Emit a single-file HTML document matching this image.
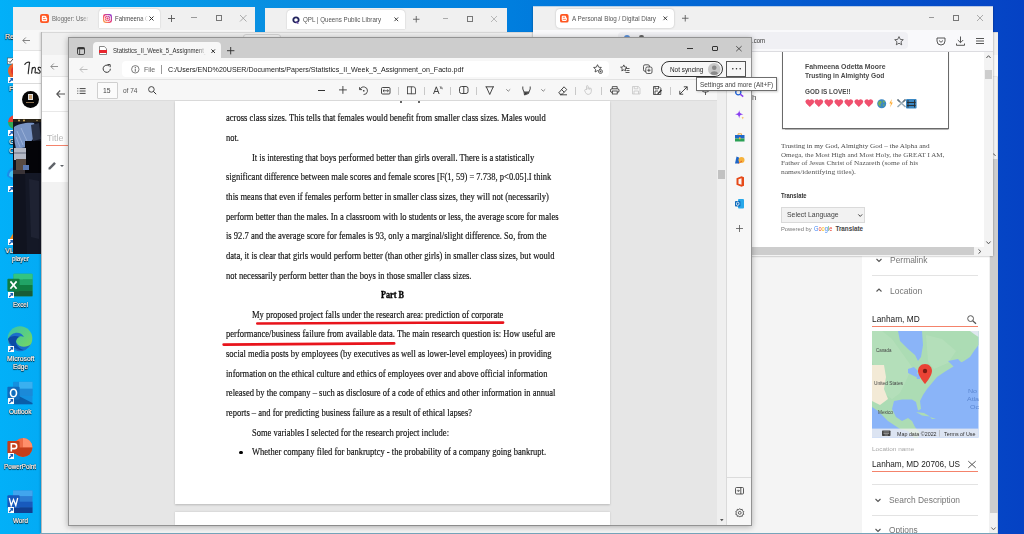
<!DOCTYPE html>
<html><head><meta charset="utf-8">
<style>
*{margin:0;padding:0;box-sizing:border-box}
html,body{width:1024px;height:534px;overflow:hidden}
body{position:relative;font-family:"Liberation Sans",sans-serif;background:linear-gradient(90deg,#02b0f8 0%,#0890e2 25%,#007ede 50%,#045ed0 75%,#0542c4 100%)}
.a{position:absolute}
.t{position:absolute;white-space:pre;transform-origin:0 0}
.w{position:absolute;left:0;top:0;width:1024px;height:534px}
.lbl{text-shadow:0 0 1px #000,0 1px 1px #000}
svg{position:absolute;overflow:visible}
</style></head><body>
<div class="w" id="desk"><svg style="left:7px;top:57px" width="7" height="27" viewBox="0 0 7 27"><rect x="0.5" y="1" width="6" height="6" fill="#fff" stroke="#555" stroke-width="0.6"/><path d="M1.5 4 L3 5.5 L6 2" stroke="#333" stroke-width="0.9" fill="none"/><circle cx="9" cy="14" r="8" fill="#f0622a"/><circle cx="9" cy="14" r="5" fill="#e2352d"/></svg><svg style="left:7.5px;top:77.0px" width="6" height="6" viewBox="0 0 6 6"><rect x="0" y="0" width="6" height="6" fill="#fff"/><path d="M1.2 5 L4.2 2 M2.4 1.6 H4.5 V3.7" stroke="#1a5fb4" stroke-width="1.2" fill="none"/></svg><svg style="left:8px;top:115px" width="6" height="14" viewBox="0 0 6 14"><path d="M6 0 A8 8 0 0 0 0 7 L6 7Z" fill="#e94335"/><path d="M0 7 A8 8 0 0 0 6 14 L6 7Z" fill="#34a853"/></svg><svg style="left:7.5px;top:130.0px" width="6" height="6" viewBox="0 0 6 6"><rect x="0" y="0" width="6" height="6" fill="#fff"/><path d="M1.2 5 L4.2 2 M2.4 1.6 H4.5 V3.7" stroke="#1a5fb4" stroke-width="1.2" fill="none"/></svg><svg style="left:7px;top:167px" width="7" height="14" viewBox="0 0 7 14"><path d="M7 0 A9 9 0 0 0 0 9 L7 14Z" fill="#1e8ae8"/><path d="M7 3 A6 6 0 0 0 2 9 L7 11Z" fill="#45c0f0"/></svg><svg style="left:7.5px;top:186.0px" width="6" height="6" viewBox="0 0 6 6"><rect x="0" y="0" width="6" height="6" fill="#fff"/><path d="M1.2 5 L4.2 2 M2.4 1.6 H4.5 V3.7" stroke="#1a5fb4" stroke-width="1.2" fill="none"/></svg><svg style="left:9px;top:232px" width="5" height="8" viewBox="0 0 5 8"><path d="M5 0 L0 8 H5Z" fill="#f08a1c"/></svg><svg style="left:7.5px;top:239.0px" width="6" height="6" viewBox="0 0 6 6"><rect x="0" y="0" width="6" height="6" fill="#fff"/><path d="M1.2 5 L4.2 2 M2.4 1.6 H4.5 V3.7" stroke="#1a5fb4" stroke-width="1.2" fill="none"/></svg><div class="t" style="left:5.00px;top:32.57px;font-size:7.00px;line-height:7.00px;color:#fff;text-shadow:0 0 1px #000,0 0 1px #000,0 1px 1px #000;-webkit-text-stroke:0.2px #fff;">Re</div><div class="t" style="left:9.00px;top:85.07px;font-size:7.00px;line-height:7.00px;color:#fff;text-shadow:0 0 1px #000,0 0 1px #000,0 1px 1px #000;-webkit-text-stroke:0.2px #fff;">F</div><div class="t" style="left:9.00px;top:137.57px;font-size:7.00px;line-height:7.00px;color:#fff;text-shadow:0 0 1px #000,0 0 1px #000,0 1px 1px #000;-webkit-text-stroke:0.2px #fff;">G</div><div class="t" style="left:9.00px;top:146.57px;font-size:7.00px;line-height:7.00px;color:#fff;text-shadow:0 0 1px #000,0 0 1px #000,0 1px 1px #000;-webkit-text-stroke:0.2px #fff;">C</div><div class="t" style="left:5.00px;top:246.57px;font-size:7.00px;line-height:7.00px;color:#fff;text-shadow:0 0 1px #000,0 0 1px #000,0 1px 1px #000;-webkit-text-stroke:0.2px #fff;">VL</div><div class="t" style="left:11.50px;top:254.57px;font-size:7.00px;line-height:7.00px;color:#fff;transform:scaleX(0.8911);text-shadow:0 0 1px #000,0 0 1px #000,0 1px 1px #000;-webkit-text-stroke:0.2px #fff;">player</div><svg style="left:7px;top:273px" width="26" height="26" viewBox="0 0 26 26"><rect x="6.5" y="0.8" width="19" height="22.5" rx="1" fill="#21a366"/><rect x="6.5" y="0.8" width="19" height="5.6" fill="#33c481"/><rect x="16" y="6.4" width="9.5" height="5.6" fill="#21a366"/><rect x="6.5" y="12" width="19" height="5.6" fill="#107c41"/><rect x="6.5" y="17.6" width="19" height="5.7" fill="#185c37"/><rect x="0.4" y="5.7" width="12.2" height="12.7" rx="1" fill="#107c41"/><path d="M3.4 8.4 L9.6 15.8 M9.6 8.4 L3.4 15.8" stroke="#fff" stroke-width="1.7"/></svg><svg style="left:7.8px;top:292.3px" width="6" height="6" viewBox="0 0 6 6"><rect x="0" y="0" width="6" height="6" fill="#fff"/><path d="M1.2 5 L4.2 2 M2.4 1.6 H4.5 V3.7" stroke="#1a5fb4" stroke-width="1.2" fill="none"/></svg><div class="t" style="left:12.50px;top:301.07px;font-size:7.00px;line-height:7.00px;color:#fff;transform:scaleX(0.8759);text-shadow:0 0 1px #000,0 0 1px #000,0 1px 1px #000;-webkit-text-stroke:0.2px #fff;">Excel</div><svg style="left:7px;top:326px" width="26" height="26" viewBox="0 0 26 26"><defs><linearGradient id="eg1" x1="0" y1="0" x2="1" y2="1"><stop offset="0" stop-color="#36c3ae"/><stop offset="1" stop-color="#7ed957"/></linearGradient></defs><circle cx="13" cy="12.5" r="12.3" fill="url(#eg1)"/><path d="M1 13 A12 12 0 0 0 24 18 C20 22 12 22 9 16 C8 12 13 9 17 11 C14 5 5 5 1 13Z" fill="#1b6fcb"/><path d="M1 13 C3 20 10 25 17 24 C12 23 9 19 9 16 C9 13 11 11 13 11 C8 9 3 10 1 13Z" fill="#0c4aa6"/></svg><svg style="left:7.8px;top:346.0px" width="6" height="6" viewBox="0 0 6 6"><rect x="0" y="0" width="6" height="6" fill="#fff"/><path d="M1.2 5 L4.2 2 M2.4 1.6 H4.5 V3.7" stroke="#1a5fb4" stroke-width="1.2" fill="none"/></svg><div class="t" style="left:6.75px;top:355.07px;font-size:7.00px;line-height:7.00px;color:#fff;transform:scaleX(0.9681);text-shadow:0 0 1px #000,0 0 1px #000,0 1px 1px #000;-webkit-text-stroke:0.2px #fff;">Microsoft</div><div class="t" style="left:12.50px;top:363.07px;font-size:7.00px;line-height:7.00px;color:#fff;transform:scaleX(0.9169);text-shadow:0 0 1px #000,0 0 1px #000,0 1px 1px #000;-webkit-text-stroke:0.2px #fff;">Edge</div><svg style="left:7px;top:381px" width="26" height="25" viewBox="0 0 26 25"><rect x="6" y="0.8" width="19.5" height="22.5" rx="1" fill="#1490df"/><rect x="12" y="0.8" width="13.5" height="7" fill="#3ab0f0"/><rect x="12" y="7.8" width="13.5" height="7" fill="#1b8ad8"/><path d="M6 12 L25.5 22 V23.3 H6Z" fill="#0a5ea8"/><rect x="0.4" y="5.7" width="12.2" height="12.7" rx="1" fill="#0f6cbd"/><ellipse cx="6.5" cy="12" rx="3" ry="3.8" fill="none" stroke="#fff" stroke-width="1.6"/></svg><svg style="left:7.8px;top:398.0px" width="6" height="6" viewBox="0 0 6 6"><rect x="0" y="0" width="6" height="6" fill="#fff"/><path d="M1.2 5 L4.2 2 M2.4 1.6 H4.5 V3.7" stroke="#1a5fb4" stroke-width="1.2" fill="none"/></svg><div class="t" style="left:8.75px;top:408.07px;font-size:7.00px;line-height:7.00px;color:#fff;transform:scaleX(0.9326);text-shadow:0 0 1px #000,0 0 1px #000,0 1px 1px #000;-webkit-text-stroke:0.2px #fff;">Outlook</div><svg style="left:7px;top:436px" width="26" height="24" viewBox="0 0 26 24"><circle cx="16" cy="11.5" r="9.4" fill="#ed6c47"/><path d="M16 2.1 A9.4 9.4 0 0 1 25.4 11.5 H16Z" fill="#ff8f6b"/><path d="M6.6 11.5 A9.4 9.4 0 0 0 25.4 11.5Z" fill="#c43e1c"/><rect x="0.4" y="5.1" width="12.2" height="12.7" rx="1" fill="#c43e1c"/><path d="M4.3 15.5 V7.8 H7.3 A2.4 2.4 0 0 1 7.3 12.6 H4.3" stroke="#fff" stroke-width="1.6" fill="none"/></svg><svg style="left:7.8px;top:453.0px" width="6" height="6" viewBox="0 0 6 6"><rect x="0" y="0" width="6" height="6" fill="#fff"/><path d="M1.2 5 L4.2 2 M2.4 1.6 H4.5 V3.7" stroke="#1a5fb4" stroke-width="1.2" fill="none"/></svg><div class="t" style="left:4.00px;top:462.57px;font-size:7.00px;line-height:7.00px;color:#fff;transform:scaleX(0.8939);text-shadow:0 0 1px #000,0 0 1px #000,0 1px 1px #000;-webkit-text-stroke:0.2px #fff;">PowerPoint</div><svg style="left:7px;top:490px" width="26" height="24" viewBox="0 0 26 24"><rect x="6" y="0.5" width="19.5" height="22.5" rx="1" fill="#2b7cd3"/><rect x="6" y="0.5" width="19.5" height="5.6" fill="#41a5ee"/><rect x="6" y="11.7" width="19.5" height="5.6" fill="#185abd"/><rect x="6" y="17.3" width="19.5" height="5.7" fill="#103f91"/><rect x="0.4" y="5.3" width="12.2" height="12.7" rx="1" fill="#185abd"/><path d="M2.3 8 L4.2 15.5 L6.5 9.5 L8.8 15.5 L10.7 8" stroke="#fff" stroke-width="1.3" fill="none"/></svg><svg style="left:7.8px;top:507.0px" width="6" height="6" viewBox="0 0 6 6"><rect x="0" y="0" width="6" height="6" fill="#fff"/><path d="M1.2 5 L4.2 2 M2.4 1.6 H4.5 V3.7" stroke="#1a5fb4" stroke-width="1.2" fill="none"/></svg><div class="t" style="left:12.50px;top:516.57px;font-size:7.00px;line-height:7.00px;color:#fff;transform:scaleX(0.9031);text-shadow:0 0 1px #000,0 0 1px #000,0 1px 1px #000;-webkit-text-stroke:0.2px #fff;">Word</div></div><div class="w" style="clip-path:inset(7px 769px 280px 13px)"><div class="a" style="left:13px;top:7px;width:243px;height:247px;background:#fff"></div><div class="a" style="left:13px;top:7px;width:243px;height:22.5px;background:#f0f0f0"></div><svg style="left:40px;top:14px" width="9" height="9" viewBox="0 0 9 9"><rect x="0" y="0" width="9" height="9" rx="2" fill="#ff5722"/><path d="M3 1.8 H5 C6 1.8 6.5 2.5 6.5 3.5 C6.5 3.9 6.8 4.1 7.2 4.2 V5.7 C7.2 6.7 6.5 7.3 5.5 7.3 H3.4 C2.5 7.3 1.8 6.6 1.8 5.7 V3 C1.8 2.3 2.3 1.8 3 1.8Z" fill="#fff"/><path d="M3.3 3.4 H4.8 M3.3 5.6 H5.8" stroke="#ff5722" stroke-width="0.8" stroke-linecap="round"/></svg><div class="a" style="left:51.60px;top:12.04px;width:39.00px;height:13.14px;-webkit-mask-image:linear-gradient(90deg,#000 30.00px,transparent 37.00px)"><div class="t" style="left:0.00px;top:2.58px;font-size:7.30px;line-height:7.30px;color:#6a6a6a;transform:scaleX(0.8202);">Blogger: User</div></div><div class="a" style="left:99px;top:9px;width:60.5px;height:19px;background:#fff;border-radius:4px 4px 0 0;box-shadow:0 0 1.5px rgba(0,0,0,.25)"></div><svg style="left:103px;top:14px" width="9" height="9" viewBox="0 0 9 9"><defs><linearGradient id="ig" x1="0" y1="1" x2="1" y2="0"><stop offset="0" stop-color="#fdc74d"/><stop offset="0.45" stop-color="#f4416c"/><stop offset="1" stop-color="#7b3fe4"/></linearGradient></defs><rect x="0" y="0" width="9" height="9" rx="2.4" fill="url(#ig)"/><rect x="1.6" y="1.6" width="5.8" height="5.8" rx="1.6" fill="none" stroke="#fff" stroke-width="0.9"/><circle cx="4.5" cy="4.5" r="1.4" fill="none" stroke="#fff" stroke-width="0.9"/></svg><div class="a" style="left:114.60px;top:12.04px;width:35.00px;height:13.14px;-webkit-mask-image:linear-gradient(90deg,#000 26.00px,transparent 33.00px)"><div class="t" style="left:0.00px;top:2.58px;font-size:7.30px;line-height:7.30px;color:#444;transform:scaleX(0.8159);">Fahmeena Odetta</div></div><svg style="left:148.5px;top:16px" width="5" height="5" viewBox="0 0 5 5"><path d="M0.5 0.5 L4.5 4.5 M4.5 0.5 L0.5 4.5" stroke="#333" stroke-width="1"/></svg><svg style="left:167.8px;top:15px" width="7" height="7" viewBox="0 0 7 7"><path d="M3.5 0 V7 M0 3.5 H7" stroke="#555" stroke-width="0.9"/></svg><div class="a" style="left:191px;top:17px;width:6px;height:0.8px;background:#999"></div><div class="a" style="left:215.6px;top:15.2px;width:6px;height:6px;border:0.8px solid #777"></div><svg style="left:240px;top:15px" width="6.5" height="6.5" viewBox="0 0 6.5 6.5"><path d="M0 0 L6.5 6.5 M6.5 0 L0 6.5" stroke="#999" stroke-width="0.8"/></svg><div class="a" style="left:13px;top:29.5px;width:243px;height:21.5px;background:#f7f7f7;border-bottom:1px solid #e3e3e3"></div><svg style="left:22px;top:37px" width="8" height="7" viewBox="0 0 8 7"><path d="M8 3.5 H1 M3.8 0.5 L0.8 3.5 L3.8 6.5" stroke="#666" stroke-width="0.8" fill="none"/></svg><svg style="left:24px;top:60px" width="18" height="15" viewBox="0 0 18 15"><path d="M0.8 4.5 C1.5 2.6 4.2 1.6 5.6 2.4 M5.6 2.4 C5 6 4.6 10 4.2 13.6 M7.6 13.2 C7.9 11 8.1 9.2 8.4 7.6 M8.3 9 C9.3 6.9 11.6 6.7 11.4 9 L11 12.6 C11.6 13.3 12.4 13 13 12.4 M16.8 7.8 C15.6 6.8 13.6 7.4 14.2 8.9 C14.8 10.3 17 10.8 16 12.6 C15.2 13.6 13.6 13.3 12.8 12.6" stroke="#262626" stroke-width="1.15" fill="none" stroke-linecap="round"/></svg><div class="a" style="left:13px;top:83px;width:243px;height:0.8px;background:#dbdbdb"></div><div class="a" style="left:22px;top:91.2px;width:16.8px;height:16.8px;border-radius:50%;background:#050505"></div><div class="a" style="left:27.8px;top:93.5px;width:5px;height:6px;background:#c9a070;border:0.8px solid #ddd"></div><div class="a" style="left:26px;top:101.5px;width:8px;height:1px;background:#8a7050"></div><svg style="left:13.3px;top:118.8px" width="28" height="135.5" viewBox="0 0 28 135.5">
<rect x="0" y="0" width="28" height="135.5" fill="#10131f"/>
<rect x="0" y="0" width="28" height="3" fill="#2a2418"/>
<circle cx="6" cy="1.5" r="1" fill="#d8b060"/><circle cx="11" cy="1.5" r="1" fill="#d8b060"/><circle cx="24" cy="1.5" r="0.8" fill="#a89060"/>
<path d="M1 8 C5 5 14 3 21 4 C23 8 22 14 20 20 L14 28 L3 30 C1 22 0.5 14 1 8Z" fill="#7894c4"/>
<path d="M4 12 L10 26 M8 9 L14 22 M3 18 L7 28" stroke="#a8bce0" stroke-width="1" opacity=".7"/>
<path d="M18 6 L26 4 L28 20 L20 22Z" fill="#2a3348"/>
<rect x="12" y="22" width="16" height="32" fill="#040408"/>
<rect x="1" y="29" width="12" height="12" fill="#b4b8c4"/>
<rect x="1" y="33" width="12" height="2" fill="#8a90a0"/>
<rect x="3" y="40" width="10" height="11" fill="#584a42"/>
<rect x="10" y="46" width="6" height="5" fill="#5a78b0"/>
<rect x="0" y="51" width="12" height="4" fill="#3a3438"/>
<path d="M12 54 L28 54 L28 135.5 L14 135.5Z" fill="#141826"/>
<path d="M16 60 L26 62 L26 120 L18 118Z" fill="#1e2232"/>
</svg></div></div><div class="w" style="clip-path:inset(7.5px 517px 502px 264.7px)"><div class="a" style="left:264.7px;top:7.5px;width:242px;height:25px;background:#f0f0f0"></div><div class="a" style="left:286.8px;top:9.8px;width:118px;height:19.4px;background:#fff;border-radius:4px 4px 0 0;box-shadow:0 0 1.5px rgba(0,0,0,.25)"></div><svg style="left:291.5px;top:15.5px" width="8" height="8" viewBox="0 0 8 8"><path d="M4 0.6 C1.8 0.6 0.4 2.1 0.4 4 C0.4 5.9 1.8 7.3 4 7.3 C6.2 7.3 7.6 5.9 7.6 4 C7.6 2.1 6.2 0.6 4 0.6Z M4 2.2 C5.1 2.2 5.7 3 5.7 4 C5.7 5 5.1 5.7 4 5.7 C2.9 5.7 2.3 5 2.3 4 C2.3 3 2.9 2.2 4 2.2Z" fill="#23255e" fill-rule="evenodd"/><path d="M4.6 5 L7 7.8 H5.2 L3.6 5.8Z" fill="#6b4ca8"/></svg><div class="t" style="left:302.60px;top:16.11px;font-size:7.20px;line-height:7.20px;color:#555;transform:scaleX(0.8599);">QPL | Queens Public Library</div><svg style="left:394.2px;top:17px" width="4.6" height="4.6" viewBox="0 0 5 5"><path d="M0.5 0.5 L4.5 4.5 M4.5 0.5 L0.5 4.5" stroke="#333" stroke-width="1"/></svg><svg style="left:413px;top:16.3px" width="6.5" height="6.5" viewBox="0 0 7 7"><path d="M3.5 0 V7 M0 3.5 H7" stroke="#555" stroke-width="0.9"/></svg><div class="a" style="left:442.8px;top:18.4px;width:5.5px;height:0.8px;background:#aaa"></div><div class="a" style="left:466.9px;top:16.4px;width:5.7px;height:5.5px;border:0.8px solid #777"></div><svg style="left:491.4px;top:16.3px" width="6" height="6" viewBox="0 0 6 6"><path d="M0 0 L6 6 M6 0 L0 6" stroke="#aaa" stroke-width="0.8"/></svg></div><div class="w" style="clip-path:inset(31.7px 26px 1px 37px)"><div class="a" style="left:40.5px;top:31.7px;width:957.5px;height:501.3px;background:#f4f4f4;border-left:1px solid #b8b8b8;box-shadow:-1px 0 2px rgba(0,0,0,.15)"></div><div class="a" style="left:41.5px;top:31.7px;width:956.5px;height:23.3px;background:#efefef;border-top:0.8px solid #d8d8d8"></div><div class="a" style="left:243px;top:33.7px;width:38px;height:6px;background:#f4f4f4;border:0.8px solid #d2d2d2;border-radius:3px 3px 0 0"></div><div class="a" style="left:41.5px;top:55px;width:956.5px;height:22px;background:#f7f7f7;border-bottom:0.8px solid #e6e6e6"></div><svg style="left:50px;top:63px" width="8" height="7" viewBox="0 0 8 7"><path d="M8 3.5 H1 M3.8 0.5 L0.8 3.5 L3.8 6.5" stroke="#777" stroke-width="0.8" fill="none"/></svg><div class="a" style="left:41.5px;top:77px;width:820px;height:104.8px;background:#fff"></div><div class="a" style="left:41.5px;top:181.8px;width:26px;height:352px;background:#f2f2f2"></div><div class="a" style="left:41.5px;top:111.3px;width:820px;height:0.8px;background:#e8e8e8"></div><svg style="left:56px;top:90px" width="9" height="8" viewBox="0 0 9 8"><path d="M9 4 H1 M4.2 0.5 L0.8 4 L4.2 7.5" stroke="#555" stroke-width="1.1" fill="none"/></svg><div class="t" style="left:46.70px;top:133.52px;font-size:8.60px;line-height:8.60px;color:#b8b8b8;transform:scaleX(1.0363);">Title</div><div class="a" style="left:46px;top:145px;width:40px;height:1.2px;background:#f4836b"></div><svg style="left:48px;top:161px" width="9" height="9" viewBox="0 0 9 9"><path d="M0.5 8.5 V6.8 L6.2 1.1 L7.9 2.8 L2.2 8.5Z" fill="#5f6368"/></svg><svg style="left:60px;top:165px" width="4" height="2" viewBox="0 0 4 2"><path d="M0 0 H4 L2 2Z" fill="#5f6368"/></svg><div class="a" style="left:861.7px;top:77px;width:127.3px;height:456px;background:#fff"></div><div class="a" style="left:989px;top:77px;width:9px;height:456px;background:#f1f1f1;border-right:1px solid #dcdcdc"></div><svg style="left:991px;top:152.5px" width="5" height="3.5" viewBox="0 0 5 3.5"><path d="M0.4 3 L2.5 0.7 L4.6 3" stroke="#666" stroke-width="1" fill="none"/></svg><div class="a" style="left:989.5px;top:159px;width:8.5px;height:353.5px;background:#cdcdcd"></div><svg style="left:991px;top:527px" width="5" height="3.5" viewBox="0 0 5 3.5"><path d="M0.4 0.5 L2.5 2.8 L4.6 0.5" stroke="#666" stroke-width="1" fill="none"/></svg><svg style="left:875.7px;top:258.0px" width="6" height="4.5" viewBox="0 0 6 4.5"><path d="M0.5 1 L3 3.5 L5.5 1" stroke="#555" stroke-width="1.1" fill="none"/></svg><div class="t" style="left:889.50px;top:255.89px;font-size:8.40px;line-height:8.40px;color:#757575;transform:scaleX(1.0071);">Permalink</div><div class="a" style="left:872.2px;top:275px;width:105.8px;height:0.8px;background:#e3e3e3"></div><svg style="left:875.7px;top:288.0px" width="6" height="4.5" viewBox="0 0 6 4.5"><path d="M0.5 3.5 L3 1 L5.5 3.5" stroke="#555" stroke-width="1.1" fill="none"/></svg><div class="t" style="left:889.50px;top:286.59px;font-size:8.40px;line-height:8.40px;color:#757575;transform:scaleX(1.0167);">Location</div><div class="t" style="left:871.50px;top:315.08px;font-size:9.00px;line-height:9.00px;color:#212121;transform:scaleX(0.9257);">Lanham, MD</div><svg style="left:966.5px;top:315.3px" width="9.5" height="9" viewBox="0 0 9.5 9"><circle cx="3.6" cy="3.6" r="2.9" fill="none" stroke="#555" stroke-width="1"/><path d="M5.7 5.7 L9 8.8" stroke="#555" stroke-width="1.2"/></svg><div class="a" style="left:871.5px;top:325.8px;width:106.5px;height:1.4px;background:#f4836b"></div><svg style="left:871.5px;top:331px" width="106.5" height="106.6" viewBox="0 0 106.5 106.6">
<rect x="0" y="0" width="106.5" height="106.6" fill="#8ab4f8"/>
<path d="M0 0 H106.5 V14 L102 20 L98 26 L92 30 L84 34 L74 40 L65 46 L60 52 L55 58 L51 64 L48 70 L49 78 L46 79.5 L44 71 L40 68.5 L30 68.5 L22 70 L20 78 L24 86 L30 90 L36 87 L40 90 L43 96 L48 102 L46 106.6 H42 L36 100 L28 98 L16 90 L6 80 L0 76Z" fill="#acdcb4"/>
<path d="M10 0 L20 8 L30 22 L40 36 L34 50 L28 62 L20 68 L12 62 L4 40 L0 30 V0Z" fill="#bfe3c2" opacity=".45"/>
<path d="M54 4 L70 8 L84 20 L76 32 L62 38 L56 30Z" fill="#bfe3c2" opacity=".45"/>
<path d="M26 0 H50 L51 14 L49 26 L46 30 L43 24 L36 18 L28 10Z" fill="#8ab4f8"/>
<path d="M36 38 L42 36 L46 40 L44 46 L40 44 L36 42Z M44 44 L48 42 L48 48 L45 48Z" fill="#8ab4f8"/>
<path d="M76 30 L86 28 L90 32 L82 36Z" fill="#8ab4f8"/>
<path d="M84 22 L90 18 L94 26 L88 30Z" fill="#acdcb4"/>
<path d="M0 34 L12 34 L14 46 L12 58 L16 68 L8 74 L0 70Z" fill="#f3ead6"/>
<path d="M98 0 H106.5 V6 L102 3Z" fill="#dfe7ef"/>
<path d="M44 81 L52 82 L58 85.5 L50 84.5Z M58 86 L64 88 L60 88Z" fill="#acdcb4"/>
<path d="M53 33 C48.5 33 46 36.5 46 40 C46 45 53 53 53 53 C53 53 60 45 60 40 C60 36.5 57.5 33 53 33Z" fill="#ea4335"/>
<circle cx="53" cy="40" r="2.2" fill="#7a1a12"/>
<rect x="0" y="97.6" width="106.5" height="9" fill="rgba(240,240,240,.8)"/>
<rect x="10" y="99.5" width="8.5" height="5.5" rx="0.7" fill="#444"/>
<path d="M11.5 101 H17 M11.5 102.5 H17 M12.5 104 H16" stroke="#ddd" stroke-width="0.5"/>
<path d="M67.5 99 V105.5" stroke="#aaa" stroke-width="0.6"/>
</svg><div class="t" style="left:875.90px;top:348.81px;font-size:4.60px;line-height:4.60px;color:#444;transform:scaleX(0.9631);">Canada</div><div class="t" style="left:873.50px;top:381.61px;font-size:4.60px;line-height:4.60px;color:#444;transform:scaleX(1.0510);">United States</div><div class="t" style="left:878.00px;top:410.81px;font-size:4.60px;line-height:4.60px;color:#444;transform:scaleX(1.0300);">Mexico</div><div class="t" style="left:967.50px;top:389.34px;font-size:5.50px;line-height:5.50px;color:#5b86d0;transform:scaleX(1.2800);">No</div><div class="t" style="left:966.50px;top:397.34px;font-size:5.50px;line-height:5.50px;color:#5b86d0;transform:scaleX(1.2652);">Atla</div><div class="t" style="left:969.50px;top:405.34px;font-size:5.50px;line-height:5.50px;color:#5b86d0;transform:scaleX(1.2800);">Oc</div><div class="t" style="left:896.90px;top:431.90px;font-size:5.20px;line-height:5.20px;color:#333;transform:scaleX(1.0302);">Map data ©2022</div><div class="t" style="left:943.50px;top:431.90px;font-size:5.20px;line-height:5.20px;color:#333;transform:scaleX(1.0307);">Terms of Use</div><div class="t" style="left:871.70px;top:446.15px;font-size:6.20px;line-height:6.20px;color:#a8a8a8;transform:scaleX(1.0420);">Location name</div><div class="t" style="left:871.70px;top:459.81px;font-size:9.20px;line-height:9.20px;color:#212121;transform:scaleX(0.8937);">Lanham, MD 20706, US</div><svg style="left:967.7px;top:460.8px" width="8" height="7" viewBox="0 0 8 7"><path d="M0.3 0.2 L7.7 6.8 M7.7 0.2 L0.3 6.8" stroke="#555" stroke-width="1"/></svg><div class="a" style="left:871.7px;top:471px;width:106.3px;height:1.3px;background:#f4836b"></div><div class="a" style="left:872.2px;top:484.3px;width:105.8px;height:0.8px;background:#e3e3e3"></div><svg style="left:875.2px;top:497.8px" width="6" height="4.5" viewBox="0 0 6 4.5"><path d="M0.5 1 L3 3.5 L5.5 1" stroke="#555" stroke-width="1.1" fill="none"/></svg><div class="t" style="left:889.30px;top:495.89px;font-size:8.40px;line-height:8.40px;color:#757575;transform:scaleX(1.0033);">Search Description</div><div class="a" style="left:872.2px;top:515px;width:105.8px;height:0.8px;background:#e3e3e3"></div><svg style="left:875.2px;top:527.6px" width="6" height="4.5" viewBox="0 0 6 4.5"><path d="M0.5 1 L3 3.5 L5.5 1" stroke="#555" stroke-width="1.1" fill="none"/></svg><div class="t" style="left:889.30px;top:526.39px;font-size:8.40px;line-height:8.40px;color:#757575;transform:scaleX(0.9939);">Options</div></div><div class="a" style="left:40px;top:532.8px;width:958px;height:1.2px;background:#76a4ba"></div><div class="w" style="clip-path:inset(6.4px 29px 275px 531px)"><div class="a" style="left:533.4px;top:6.4px;width:459.2px;height:249.6px;background:#fff;box-shadow:0 0 2px rgba(0,0,0,.4)"></div><div class="a" style="left:533.4px;top:6.4px;width:459.2px;height:23.4px;background:#f0f0f0"></div><div class="a" style="left:555.8px;top:8.5px;width:118px;height:19.5px;background:#fff;border-radius:4px;box-shadow:0 0 2px rgba(0,0,0,.25)"></div><svg style="left:560px;top:14px" width="8.6" height="8.6" viewBox="0 0 9 9"><rect x="0" y="0" width="9" height="9" rx="2" fill="#ff5722"/><path d="M3 1.8 H5 C6 1.8 6.5 2.5 6.5 3.5 C6.5 3.9 6.8 4.1 7.2 4.2 V5.7 C7.2 6.7 6.5 7.3 5.5 7.3 H3.4 C2.5 7.3 1.8 6.6 1.8 5.7 V3 C1.8 2.3 2.3 1.8 3 1.8Z" fill="#fff"/><path d="M3.3 3.4 H4.8 M3.3 5.6 H5.8" stroke="#ff5722" stroke-width="0.8" stroke-linecap="round"/></svg><div class="t" style="left:572.00px;top:15.41px;font-size:7.20px;line-height:7.20px;color:#555;transform:scaleX(0.8760);">A Personal Blog / Digital Diary</div><svg style="left:662.8px;top:16px" width="4.6" height="4.6" viewBox="0 0 5 5"><path d="M0.5 0.5 L4.5 4.5 M4.5 0.5 L0.5 4.5" stroke="#333" stroke-width="1"/></svg><svg style="left:681.8px;top:15px" width="6.5" height="6.5" viewBox="0 0 7 7"><path d="M3.5 0 V7 M0 3.5 H7" stroke="#555" stroke-width="0.9"/></svg><div class="a" style="left:928.7px;top:17.4px;width:5.5px;height:0.8px;background:#999"></div><div class="a" style="left:953.2px;top:15.4px;width:5.7px;height:5.5px;border:0.8px solid #777"></div><svg style="left:977.3px;top:15.2px" width="6" height="6" viewBox="0 0 6 6"><path d="M0 0 L6 6 M6 0 L0 6" stroke="#999" stroke-width="0.8"/></svg><div class="t" style="left:752.20px;top:93.73px;font-size:8.00px;line-height:8.00px;color:#555;transform:scaleX(1.0105);">h</div><div class="a" style="left:781.6px;top:40px;width:167.4px;height:89.3px;border:1px solid #6a6a6a;box-shadow:0 0.5px 1px rgba(0,0,0,.3)"></div><div class="a" style="left:533.4px;top:29.8px;width:459.2px;height:21.8px;background:#f9f9fb;border-bottom:0.8px solid #dcdce0;z-index:0"></div><div class="a" style="left:618px;top:31.7px;width:290px;height:17.3px;background:#f0f0f4;border-radius:4px"></div><div class="a" style="left:624px;top:34.5px;width:6px;height:6px;background:#5a8fd8;border-radius:50%"></div><div class="a" style="left:639px;top:34.5px;width:5px;height:6px;background:#666;border-radius:40%"></div><div class="t" style="left:752.00px;top:37.15px;font-size:7.50px;line-height:7.50px;color:#333;transform:scaleX(0.7992);">.com</div><svg style="left:894px;top:36px" width="10" height="9.5" viewBox="0 0 10 9.5"><path d="M5 0.6 L6.3 3.4 L9.3 3.7 L7 5.7 L7.7 8.8 L5 7.2 L2.3 8.8 L3 5.7 L0.7 3.7 L3.7 3.4Z" fill="none" stroke="#444" stroke-width="0.8" stroke-linejoin="round"/></svg><svg style="left:936px;top:36.5px" width="10" height="9" viewBox="0 0 10 9"><path d="M1 1 H9 V4 A4 4 0 0 1 1 4Z" fill="none" stroke="#444" stroke-width="0.9"/><path d="M3 3.5 L5 5.3 L7 3.5" stroke="#444" stroke-width="0.9" fill="none"/></svg><svg style="left:955.5px;top:35.5px" width="9" height="10" viewBox="0 0 9 10"><path d="M4.5 0.5 V6.5 M1.8 4 L4.5 6.7 L7.2 4 M0.5 7.5 V9.3 H8.5 V7.5" stroke="#444" stroke-width="0.9" fill="none"/></svg><svg style="left:975.5px;top:37.5px" width="8" height="6" viewBox="0 0 8 6"><path d="M0 0.5 H8 M0 3 H8 M0 5.5 H8" stroke="#444" stroke-width="0.9"/></svg><div class="t" style="left:805.20px;top:63.61px;font-size:6.60px;line-height:6.60px;color:#4a4a4a;font-weight:700;transform:scaleX(1.0474);">Fahmeena Odetta Moore</div><div class="t" style="left:805.20px;top:73.11px;font-size:6.60px;line-height:6.60px;color:#4a4a4a;font-weight:700;transform:scaleX(1.0100);">Trusting in Almighty God</div><div class="t" style="left:805.20px;top:89.01px;font-size:6.60px;line-height:6.60px;color:#4a4a4a;font-weight:700;transform:scaleX(0.9669);">GOD IS LOVE!!</div><svg style="left:804.5px;top:99.3px" width="9.6" height="8" viewBox="0 0 12 10"><path d="M6 10 L1.2 5.3 A2.9 2.9 0 0 1 6 1.6 A2.9 2.9 0 0 1 10.8 5.3Z" fill="#f0506e"/></svg><svg style="left:814.4px;top:99.3px" width="9.6" height="8" viewBox="0 0 12 10"><path d="M6 10 L1.2 5.3 A2.9 2.9 0 0 1 6 1.6 A2.9 2.9 0 0 1 10.8 5.3Z" fill="#f0506e"/></svg><svg style="left:824.3px;top:99.3px" width="9.6" height="8" viewBox="0 0 12 10"><path d="M6 10 L1.2 5.3 A2.9 2.9 0 0 1 6 1.6 A2.9 2.9 0 0 1 10.8 5.3Z" fill="#f0506e"/></svg><svg style="left:834.2px;top:99.3px" width="9.6" height="8" viewBox="0 0 12 10"><path d="M6 10 L1.2 5.3 A2.9 2.9 0 0 1 6 1.6 A2.9 2.9 0 0 1 10.8 5.3Z" fill="#f0506e"/></svg><svg style="left:844.1px;top:99.3px" width="9.6" height="8" viewBox="0 0 12 10"><path d="M6 10 L1.2 5.3 A2.9 2.9 0 0 1 6 1.6 A2.9 2.9 0 0 1 10.8 5.3Z" fill="#f0506e"/></svg><svg style="left:854.0px;top:99.3px" width="9.6" height="8" viewBox="0 0 12 10"><path d="M6 10 L1.2 5.3 A2.9 2.9 0 0 1 6 1.6 A2.9 2.9 0 0 1 10.8 5.3Z" fill="#f0506e"/></svg><svg style="left:863.9px;top:99.3px" width="9.6" height="8" viewBox="0 0 12 10"><path d="M6 10 L1.2 5.3 A2.9 2.9 0 0 1 6 1.6 A2.9 2.9 0 0 1 10.8 5.3Z" fill="#f0506e"/></svg><svg style="left:876.9px;top:98.6px" width="9.4" height="9.4" viewBox="0 0 10 10"><circle cx="5" cy="5" r="4.8" fill="#3b88c3"/><path d="M2 2.5 L4.5 2 L5 4 L3.5 5.5 L4 8 L2.5 7.5 L1 5Z M6 1 L8.5 3 L7 4.5Z M6 6 L8 5.5 L7.5 8Z" fill="#77b255"/></svg><svg style="left:889px;top:99px" width="4" height="8.5" viewBox="0 0 4 8.5"><path d="M2.8 0 L0.3 4.5 H2 L1 8.5 L3.8 3.6 H2.2Z" fill="#ffac33"/></svg><svg style="left:896.6px;top:99px" width="9" height="8.5" viewBox="0 0 9 8.5"><path d="M0.5 0.5 L8.5 8 M8.5 0.5 L0.5 8" stroke="#99aab5" stroke-width="1.5"/><path d="M0.5 0.5 L3 3 M8.5 0.5 L6 3" stroke="#66757f" stroke-width="1.5"/></svg><svg style="left:906px;top:98.5px" width="10.6" height="9.5" viewBox="0 0 10.6 9.5"><rect x="0" y="0" width="10.6" height="9.5" rx="1" fill="#3b88c3"/><path d="M2 1 V8.5 M8.6 1 V8.5 M1 3.5 H9.6 M1 6.5 H9.6" stroke="#292f33" stroke-width="1"/></svg><div class="t" style="left:781.20px;top:143.39px;font-size:6.70px;line-height:6.70px;color:#4a4a4a;font-family:'Liberation Serif', serif;transform:scaleX(1.0734);">Trusting in my God, Almighty God – the Alpha and</div><div class="t" style="left:781.20px;top:151.79px;font-size:6.70px;line-height:6.70px;color:#555;font-family:'Liberation Serif', serif;transform:scaleX(1.0547);">Omega, the Most High and Most Holy, the GREAT I AM,</div><div class="t" style="left:781.20px;top:159.99px;font-size:6.70px;line-height:6.70px;color:#555;font-family:'Liberation Serif', serif;transform:scaleX(1.0880);">Father of Jesus Christ of Nazareth (some of his</div><div class="t" style="left:781.20px;top:168.69px;font-size:6.70px;line-height:6.70px;color:#555;font-family:'Liberation Serif', serif;transform:scaleX(1.1215);">names/identifying titles).</div><div class="t" style="left:781.10px;top:193.17px;font-size:6.30px;line-height:6.30px;color:#333;font-weight:700;transform:scaleX(0.9256);">Translate</div><div class="a" style="left:781px;top:206.7px;width:84px;height:16px;background:#f2f2f2;border:0.8px solid #dadada"></div><div class="t" style="left:786.70px;top:211.02px;font-size:7.30px;line-height:7.30px;color:#444;transform:scaleX(0.9419);">Select Language</div><svg style="left:857.6px;top:213.6px" width="4.5" height="3" viewBox="0 0 4.5 3"><path d="M0.3 0.4 L2.25 2.4 L4.2 0.4" stroke="#333" stroke-width="0.9" fill="none"/></svg><div class="t" style="left:781.00px;top:226.22px;font-size:6.00px;line-height:6.00px;color:#777;transform:scaleX(0.9657);">Powered by</div><div class="t" style="left:814.3px;top:225.2px;font-size:7px;line-height:7px;transform:scaleX(0.81)"><span style="color:#4285f4">G</span><span style="color:#ea4335">o</span><span style="color:#fbbc05">o</span><span style="color:#4285f4">g</span><span style="color:#34a853">l</span><span style="color:#ea4335">e</span></div><div class="t" style="left:835.40px;top:225.97px;font-size:6.30px;line-height:6.30px;color:#444;font-weight:700;">Translate</div><div class="a" style="left:984px;top:51.6px;width:8.6px;height:196px;background:#f3f3f3"></div><svg style="left:985.8px;top:54.5px" width="5" height="3.5" viewBox="0 0 5 3.5"><path d="M0.4 3 L2.5 0.7 L4.6 3" stroke="#555" stroke-width="1" fill="none"/></svg><div class="a" style="left:984.5px;top:70px;width:7.6px;height:9px;background:#cdcdcd"></div><svg style="left:985.5px;top:241px" width="5" height="3.5" viewBox="0 0 5 3.5"><path d="M0.4 0.5 L2.5 2.8 L4.6 0.5" stroke="#555" stroke-width="1" fill="none"/></svg><div class="a" style="left:533.4px;top:247.2px;width:459.2px;height:8.8px;background:#f3f3f3"></div><div class="a" style="left:533.4px;top:247.2px;width:440.6px;height:8.2px;background:#cdcdcd"></div><svg style="left:977.5px;top:249.2px" width="3.5" height="5" viewBox="0 0 3.5 5"><path d="M0.5 0.4 L2.8 2.5 L0.5 4.6" stroke="#555" stroke-width="1" fill="none"/></svg></div><div class="w" style="clip-path:inset(30px 262px 0px 60px)"><div class="a" style="left:67.5px;top:37.2px;width:684px;height:488.8px;background:#e6e6e6;border:1px solid #939393;box-shadow:0 1px 6px rgba(0,0,0,.3)"></div><div class="a" style="left:68.5px;top:38.2px;width:682px;height:20px;background:#cdcdcd"></div><svg style="left:77px;top:47px" width="8" height="8" viewBox="0 0 8 8"><rect x="0.5" y="0.5" width="7" height="7" rx="1.3" fill="none" stroke="#333" stroke-width="0.9"/><rect x="0.5" y="0.5" width="7" height="1.8" fill="#333"/><path d="M2.6 2.3 V7.5" stroke="#333" stroke-width="0.8"/></svg><div class="a" style="left:93.3px;top:42.2px;width:128px;height:16.5px;background:#f7f7f7;border-radius:4px 4px 0 0"></div><svg style="left:99px;top:46px" width="8" height="9" viewBox="0 0 8 9"><path d="M0.5 0.5 H5.3 L7.5 2.7 V8.5 H0.5Z" fill="#fff" stroke="#555" stroke-width="0.7"/><rect x="0" y="4" width="8" height="3" fill="#e8262e"/></svg><div class="a" style="left:113.00px;top:44.64px;width:95.00px;height:13.14px;-webkit-mask-image:linear-gradient(90deg,#000 85.00px,transparent 93.00px)"><div class="t" style="left:0.00px;top:2.58px;font-size:7.30px;line-height:7.30px;color:#333;transform:scaleX(0.8257);">Statistics_II_Week_5_Assignment_on_Facto.pdf</div></div><svg style="left:210.6px;top:48.8px" width="4.4" height="4.4" viewBox="0 0 5 5"><path d="M0.5 0.5 L4.5 4.5 M4.5 0.5 L0.5 4.5" stroke="#222" stroke-width="1.1"/></svg><svg style="left:227.3px;top:46.8px" width="7.4" height="7.4" viewBox="0 0 7 7"><path d="M3.5 0 V7 M0 3.5 H7" stroke="#333" stroke-width="0.9"/></svg><div class="a" style="left:687.1px;top:48.1px;width:6px;height:0.9px;background:#333"></div><div class="a" style="left:712px;top:46.1px;width:5.8px;height:5px;border:0.9px solid #333;border-radius:1px"></div><svg style="left:736.3px;top:45.8px" width="5.8" height="5.4" viewBox="0 0 6 5.6"><path d="M0.2 0.2 L5.8 5.4 M5.8 0.2 L0.2 5.4" stroke="#333" stroke-width="0.8"/></svg><div class="a" style="left:68.5px;top:58.2px;width:682px;height:21px;background:#f7f7f7"></div><svg style="left:79px;top:65.5px" width="8.5" height="7" viewBox="0 0 8.5 7"><path d="M8.5 3.5 H1 M4 0.5 L1 3.5 L4 6.5" stroke="#b5b5b5" stroke-width="0.9" fill="none"/></svg><svg style="left:102px;top:64.2px" width="9.5" height="9.5" viewBox="0 0 10 10"><path d="M8.8 5 A3.8 3.8 0 1 1 7.2 1.9" stroke="#333" stroke-width="1" fill="none"/><path d="M5.8 0.6 H8.6 V3.4" stroke="#333" stroke-width="1" fill="none"/></svg><div class="a" style="left:122px;top:61.2px;width:487px;height:16px;background:#fff;border-radius:4px"></div><svg style="left:130.8px;top:64.8px" width="8.6" height="8.6" viewBox="0 0 9 9"><circle cx="4.5" cy="4.5" r="3.9" fill="none" stroke="#555" stroke-width="0.8"/><path d="M4.5 3.8 V7" stroke="#555" stroke-width="0.9"/><circle cx="4.5" cy="2.5" r="0.55" fill="#555"/></svg><div class="t" style="left:143.80px;top:66.42px;font-size:7.30px;line-height:7.30px;color:#666;transform:scaleX(0.9519);">File</div><div class="a" style="left:161px;top:64.5px;width:0.8px;height:9px;background:#999"></div><div class="t" style="left:168.30px;top:66.47px;font-size:7.60px;line-height:7.60px;color:#222;transform:scaleX(0.9348);">C:/Users/END%20USER/Documents/Papers/Statistics_II_Week_5_Assignment_on_Facto.pdf</div><svg style="left:592.5px;top:64px" width="10" height="10" viewBox="0 0 10 10"><path d="M4.5 0.7 L5.7 3.2 L8.4 3.5 L6.4 5.3 L6.9 8 L4.5 6.6 L2.1 8 L2.6 5.3 L0.6 3.5 L3.3 3.2Z" fill="none" stroke="#333" stroke-width="0.8" stroke-linejoin="round"/><circle cx="7.5" cy="7.5" r="2" fill="#f7f7f7" stroke="#333" stroke-width="0.7"/><path d="M7.5 6.5 V8.5 M6.5 7.5 H8.5" stroke="#333" stroke-width="0.6"/></svg><svg style="left:619.5px;top:64px" width="10" height="10" viewBox="0 0 10 10"><path d="M3.8 0.9 L4.8 3 L7 3.2 L5.3 4.7 L5.8 6.9 L3.8 5.8 L1.8 6.9 L2.3 4.7 L0.6 3.2 L2.8 3Z" fill="none" stroke="#333" stroke-width="0.8" stroke-linejoin="round"/><path d="M6 4.5 H9.5 M6.5 6.5 H9.5 M5.5 8.5 H9.5" stroke="#333" stroke-width="0.8"/></svg><svg style="left:643px;top:64px" width="9.5" height="10" viewBox="0 0 9.5 10"><rect x="0.5" y="0.8" width="6" height="6.5" rx="1.5" fill="none" stroke="#333" stroke-width="0.8"/><rect x="2.8" y="3" width="6.2" height="6.5" rx="1.5" fill="#f7f7f7" stroke="#333" stroke-width="0.8"/><path d="M5.9 4.6 V7.9 M4.25 6.25 H7.55" stroke="#333" stroke-width="0.8"/></svg><div class="a" style="left:661.2px;top:61.4px;width:61.5px;height:15.8px;border:0.9px solid #333;border-radius:8px"></div><div class="t" style="left:669.60px;top:65.72px;font-size:7.30px;line-height:7.30px;color:#222;transform:scaleX(0.8761);">Not syncing</div><svg style="left:708.2px;top:63px" width="12.5" height="12.5" viewBox="0 0 12 12"><circle cx="6" cy="6" r="6" fill="#c8c8c8"/><circle cx="6" cy="4.6" r="2.2" fill="#8a8a8a"/><path d="M2.2 10 A4 3 0 0 1 9.8 10 A6 6 0 0 1 2.2 10Z" fill="#8a8a8a"/></svg><div class="a" style="left:726.2px;top:61.4px;width:20.3px;height:15.6px;border:0.9px solid #555"></div><svg style="left:732px;top:68.3px" width="9" height="1.6" viewBox="0 0 9 1.6"><circle cx="0.8" cy="0.8" r="0.75" fill="#222"/><circle cx="4.5" cy="0.8" r="0.75" fill="#222"/><circle cx="8.2" cy="0.8" r="0.75" fill="#222"/></svg><div class="a" style="left:68.5px;top:79.2px;width:649px;height:22px;background:#f7f7f7;border-top:0.8px solid #e2e2e2;border-bottom:0.8px solid #dcdcdc"></div><svg style="left:77px;top:87.5px" width="9" height="6" viewBox="0 0 9 6"><path d="M0.3 0.6 H1.3 M0.3 3 H1.3 M0.3 5.4 H1.3 M2.6 0.6 H8.6 M2.6 3 H8.6 M2.6 5.4 H8.6" stroke="#333" stroke-width="0.9"/></svg><div class="a" style="left:96.5px;top:82.4px;width:21px;height:16.2px;background:#fbfbfb;border:0.8px solid #cfcfcf;border-radius:1px"></div><div class="t" style="left:103.20px;top:87.22px;font-size:7.30px;line-height:7.30px;color:#444;transform:scaleX(0.9354);">15</div><div class="t" style="left:122.60px;top:87.22px;font-size:7.30px;line-height:7.30px;color:#555;transform:scaleX(0.8932);">of 74</div><svg style="left:148px;top:86px" width="8.5" height="8.5" viewBox="0 0 8.5 8.5"><circle cx="3.4" cy="3.4" r="2.8" fill="none" stroke="#333" stroke-width="0.9"/><path d="M5.4 5.4 L8.2 8.2" stroke="#333" stroke-width="1"/></svg><div class="a" style="left:317.5px;top:89.8px;width:7.5px;height:0.9px;background:#333"></div><svg style="left:338.6px;top:86.2px" width="7.8" height="7.8" viewBox="0 0 8 8"><path d="M4 0 V8 M0 4 H8" stroke="#333" stroke-width="0.9"/></svg><svg style="left:359px;top:85.5px" width="9.5" height="9.5" viewBox="0 0 10 10"><path d="M1.2 3.6 A4 4 0 1 1 4.8 9" stroke="#333" stroke-width="0.9" fill="none"/><path d="M0.6 1.2 V3.8 H3.2" stroke="#333" stroke-width="0.9" fill="none"/><circle cx="5" cy="5" r="0.9" fill="#333"/></svg><svg style="left:380.8px;top:86.5px" width="9.5" height="7.5" viewBox="0 0 9.5 7.5"><rect x="0.5" y="0.5" width="8.5" height="6.5" rx="1" fill="none" stroke="#333" stroke-width="0.9"/><path d="M2 3.75 H7.5 M3.3 2.5 L2 3.75 L3.3 5 M6.2 2.5 L7.5 3.75 L6.2 5" stroke="#333" stroke-width="0.8" fill="none"/></svg><div class="a" style="left:398.2px;top:86.6px;width:0.8px;height:8px;background:#c8c8c8"></div><svg style="left:407.3px;top:86px" width="9" height="8.5" viewBox="0 0 9 8.5"><rect x="0.5" y="0.8" width="3.8" height="7" fill="none" stroke="#333" stroke-width="0.8"/><path d="M4.3 0.8 H6.5 A2.2 2.2 0 0 1 8.5 3 V7.8 H4.3" fill="none" stroke="#333" stroke-width="0.8"/></svg><div class="a" style="left:424.3px;top:86.6px;width:0.8px;height:8px;background:#c8c8c8"></div><svg style="left:433px;top:86px" width="9.5" height="8.5" viewBox="0 0 9.5 8.5"><path d="M0.5 8 L3.3 0.8 L6.1 8 M1.5 5.5 H5.1" stroke="#333" stroke-width="0.9" fill="none"/><path d="M6.8 0.8 A2.5 2.5 0 0 1 8 3 M7.6 0.2 A4 4 0 0 1 9.3 3.2" stroke="#333" stroke-width="0.7" fill="none"/></svg><div class="a" style="left:450.4px;top:86.6px;width:0.8px;height:8px;background:#c8c8c8"></div><svg style="left:459px;top:86.3px" width="9.5" height="8" viewBox="0 0 9.5 8"><rect x="0.5" y="0.5" width="8.5" height="7" rx="2" fill="none" stroke="#333" stroke-width="0.9"/><path d="M4.75 0.5 V7.5" stroke="#333" stroke-width="0.9"/></svg><div class="a" style="left:476.4px;top:86.6px;width:0.8px;height:8px;background:#c8c8c8"></div><svg style="left:485px;top:86px" width="9.5" height="9" viewBox="0 0 9.5 9"><path d="M0.5 0.8 H9 M1.3 0.8 L4.75 8.5 L8.2 0.8" stroke="#333" stroke-width="0.9" fill="none"/></svg><svg style="left:505.8px;top:89.2px" width="4.5" height="2.6" viewBox="0 0 4.5 2.6"><path d="M0.3 0.3 L2.25 2.2 L4.2 0.3" stroke="#555" stroke-width="0.7" fill="none"/></svg><svg style="left:522px;top:85.8px" width="9" height="9.5" viewBox="0 0 9 9.5"><path d="M0.8 0.5 V3 L2 6 H7 L8.2 3 V0.5 M2 6 L2.5 9 L6.5 7.5 L7 6" stroke="#333" stroke-width="0.9" fill="none"/><path d="M2.4 6.3 L2.8 8.6 L6.3 7.3 L6.7 6.3Z" fill="#333"/></svg><svg style="left:541.2px;top:89.2px" width="4.5" height="2.6" viewBox="0 0 4.5 2.6"><path d="M0.3 0.3 L2.25 2.2 L4.2 0.3" stroke="#555" stroke-width="0.7" fill="none"/></svg><svg style="left:557.8px;top:85.5px" width="9.5" height="9.5" viewBox="0 0 9.5 9.5"><path d="M6 0.8 L8.8 3.6 L4.2 8.2 H2 L0.7 6.9 Z M3.4 3.4 L6.2 6.2 M2 8.8 H9" stroke="#333" stroke-width="0.9" fill="none" stroke-linejoin="round"/></svg><div class="a" style="left:575.4px;top:86.6px;width:0.8px;height:8px;background:#c8c8c8"></div><svg style="left:584px;top:85.2px" width="8.5" height="9.5" viewBox="0 0 8.5 9.5"><path d="M2.5 5 V1.4 A0.8 0.8 0 0 1 4.1 1.4 V4.5 M4.1 3.5 A0.8 0.8 0 0 1 5.7 3.5 V4.8 M5.7 4 A0.8 0.8 0 0 1 7.3 4 V6.5 A3 3 0 0 1 1.5 7.5 L0.7 5.6 A0.8 0.8 0 0 1 2.2 5" stroke="#c2c2c2" stroke-width="0.8" fill="none"/></svg><div class="a" style="left:601.2px;top:86.6px;width:0.8px;height:8px;background:#c8c8c8"></div><svg style="left:610px;top:86px" width="9.5" height="8.5" viewBox="0 0 9.5 8.5"><path d="M2.3 2.8 V0.6 H7.2 V2.8" stroke="#333" stroke-width="0.8" fill="none"/><rect x="0.5" y="2.8" width="8.5" height="3.6" rx="1.4" fill="none" stroke="#333" stroke-width="0.9"/><rect x="2.3" y="5" width="4.9" height="3" fill="#f7f7f7" stroke="#333" stroke-width="0.8"/></svg><svg style="left:632px;top:86px" width="8.5" height="8.5" viewBox="0 0 8.5 8.5"><path d="M0.5 0.5 H6.3 L8 2.2 V8 H0.5Z M2.2 0.5 V2.8 H5.8 V0.5 M2 8 V5 H6.5 V8" stroke="#c5c5c5" stroke-width="0.8" fill="none"/></svg><svg style="left:652.7px;top:85.6px" width="9" height="9" viewBox="0 0 9 9"><path d="M0.5 0.5 H6 L7.8 2.3 V8.5 H0.5Z M2 0.5 V2.8 H5.5 V0.5 M2 8.5 V5 H5" stroke="#333" stroke-width="0.8" fill="none"/><path d="M4.3 8.6 L4.6 6.9 L8 3.5 L9 4.5 L5.6 7.9Z" fill="#333"/></svg><div class="a" style="left:670.2px;top:86.6px;width:0.8px;height:8px;background:#c8c8c8"></div><svg style="left:678.5px;top:85.8px" width="9" height="9" viewBox="0 0 9 9"><path d="M0.8 8.2 L8.2 0.8 M4.8 0.8 H8.2 V4.2 M0.8 4.8 V8.2 H4.2" stroke="#333" stroke-width="0.9" fill="none"/></svg><svg style="left:700.5px;top:85.5px" width="9" height="9" viewBox="0 0 9 9"><path d="M2.5 4.5 L4 0.8 H5 L6.5 4.5 H8.5 L6 6 H3 L0.5 4.5Z M4.5 6 V9" stroke="#333" stroke-width="0.8" fill="none"/></svg><div class="a" style="left:717.3px;top:79.2px;width:9.3px;height:446px;background:#efefef"></div><div class="a" style="left:718.4px;top:170.2px;width:6.8px;height:8.5px;background:#c2c2c2"></div><svg style="left:720.2px;top:518.6px" width="3.6" height="2.2" viewBox="0 0 3.6 2.2"><path d="M0 0 H3.6 L1.8 2.2Z" fill="#555"/></svg><div class="a" style="left:726.4px;top:79.2px;width:24.6px;height:446px;background:#f7f7f7;border-left:0.8px solid #dadada"></div><svg style="left:735px;top:89px" width="9" height="8" viewBox="0 0 9 8"><circle cx="3.3" cy="3.3" r="2.6" fill="none" stroke="#1b5fd6" stroke-width="1.3"/><path d="M5.2 5.2 L8.2 7.6" stroke="#8a3ff0" stroke-width="1.5"/></svg><svg style="left:734.5px;top:109.8px" width="10" height="10" viewBox="0 0 10 10"><path d="M4.2 0 C4.6 3 5.4 3.8 8.4 4.2 C5.4 4.6 4.6 5.4 4.2 8.4 C3.8 5.4 3 4.6 0 4.2 C3 3.8 3.8 3 4.2 0Z" fill="#8a3ff0"/><path d="M7.8 6.2 C7.9 7.3 8.2 7.6 9.4 7.8 C8.2 8 7.9 8.3 7.8 9.5 C7.7 8.3 7.4 8 6.2 7.8 C7.4 7.6 7.7 7.3 7.8 6.2Z" fill="#f6b23c"/></svg><svg style="left:734.5px;top:132.5px" width="9.5" height="8.5" viewBox="0 0 9.5 8.5"><path d="M3 2 V0.8 H6.5 V2" stroke="#e8a33a" stroke-width="0.9" fill="none"/><rect x="0" y="2" width="9.5" height="3.5" fill="#1e66c8"/><rect x="0" y="5.5" width="9.5" height="3" fill="#2aa055"/><rect x="4" y="4.3" width="1.6" height="2" fill="#f6b23c"/></svg><svg style="left:734.8px;top:156px" width="9.5" height="8" viewBox="0 0 9.5 8"><path d="M1.5 0.5 L4 1.5 V7.5 H0Z" fill="#1e66c8"/><circle cx="6.5" cy="4" r="3" fill="#f6b23c"/><path d="M3.5 7.5 L7 5" stroke="#e35d2e" stroke-width="1"/></svg><svg style="left:735.5px;top:176px" width="8.5" height="11" viewBox="0 0 8.5 11"><path d="M0.5 2.3 L5.5 0.3 L8 1.3 V9.7 L5.5 10.7 L0.5 8.7Z M2.5 3.3 V7.7 L5.5 8.7 V2.3Z" fill="#e64a19" fill-rule="evenodd"/></svg><svg style="left:735px;top:199px" width="9" height="9.5" viewBox="0 0 9 9.5"><rect x="3" y="0" width="6" height="9.5" rx="1" fill="#28a8ea"/><rect x="0" y="2" width="5.5" height="5.5" rx="0.8" fill="#0f6cbd"/><ellipse cx="2.75" cy="4.75" rx="1.3" ry="1.7" fill="none" stroke="#fff" stroke-width="0.8"/></svg><svg style="left:735.6px;top:225px" width="7" height="7" viewBox="0 0 7 7"><path d="M3.5 0 V7 M0 3.5 H7" stroke="#555" stroke-width="0.8"/></svg><div class="a" style="left:727.2px;top:477.3px;width:23.8px;height:0.8px;background:#dcdcdc"></div><svg style="left:735px;top:487px" width="9" height="7.5" viewBox="0 0 9 7.5"><rect x="0.5" y="0.5" width="8" height="6.5" rx="1" fill="none" stroke="#333" stroke-width="0.8"/><path d="M5.8 0.5 V7" stroke="#333" stroke-width="0.8"/><path d="M1.8 3.75 H4.3 M3.3 2.7 L4.3 3.75 L3.3 4.8" stroke="#333" stroke-width="0.7" fill="none"/></svg><svg style="left:734.5px;top:508px" width="9.5" height="9.5" viewBox="0 0 10 10"><path d="M5 0.6 L6 1.8 L7.6 1.4 L7.8 3 L9.3 3.8 L8.5 5.2 L9.3 6.6 L7.8 7.2 L7.6 8.8 L6 8.4 L5 9.6 L4 8.4 L2.4 8.8 L2.2 7.2 L0.7 6.6 L1.5 5.2 L0.7 3.8 L2.2 3 L2.4 1.4 L4 1.8Z" fill="none" stroke="#333" stroke-width="0.8" stroke-linejoin="round"/><circle cx="5" cy="5.1" r="1.5" fill="none" stroke="#333" stroke-width="0.8"/></svg><div class="a" style="left:174.5px;top:101.2px;width:435.8px;height:402.8px;background:#fff;box-shadow:0 1px 2px rgba(0,0,0,.2)"></div><div class="a" style="left:174.5px;top:511.8px;width:435.8px;height:13.4px;background:#fff;box-shadow:0 0 2px rgba(0,0,0,.15)"></div><div class="t" style="left:226.00px;top:114.41px;font-size:9.30px;line-height:9.30px;color:#111;font-family:'Liberation Serif', serif;transform:scaleX(0.9190);-webkit-text-stroke:0.15px #111;">across class sizes. This tells that females would benefit from smaller class sizes. Males would</div><div class="t" style="left:226.00px;top:134.05px;font-size:9.30px;line-height:9.30px;color:#111;font-family:'Liberation Serif', serif;transform:scaleX(0.9143);-webkit-text-stroke:0.15px #111;">not.</div><div class="t" style="left:251.70px;top:153.69px;font-size:9.30px;line-height:9.30px;color:#111;font-family:'Liberation Serif', serif;transform:scaleX(0.9175);-webkit-text-stroke:0.15px #111;">It is interesting that boys performed better than girls overall. There is a statistically</div><div class="t" style="left:226.00px;top:173.33px;font-size:9.30px;line-height:9.30px;color:#111;font-family:'Liberation Serif', serif;transform:scaleX(0.9187);-webkit-text-stroke:0.15px #111;">significant difference between male scores and female scores [F(1, 59) = 7.738, p&lt;0.05].I think</div><div class="t" style="left:226.00px;top:192.97px;font-size:9.30px;line-height:9.30px;color:#111;font-family:'Liberation Serif', serif;transform:scaleX(0.9167);-webkit-text-stroke:0.15px #111;">this means that even if females perform better in smaller class sizes, they will not (necessarily)</div><div class="t" style="left:226.00px;top:212.61px;font-size:9.30px;line-height:9.30px;color:#111;font-family:'Liberation Serif', serif;transform:scaleX(0.9180);-webkit-text-stroke:0.15px #111;">perform better than the males. In a classroom with lo students or less, the average score for males</div><div class="t" style="left:226.00px;top:232.25px;font-size:9.30px;line-height:9.30px;color:#111;font-family:'Liberation Serif', serif;transform:scaleX(0.9194);-webkit-text-stroke:0.15px #111;">is 92.7 and the average score for females is 93, only a marginal/slight difference. So, from the</div><div class="t" style="left:226.00px;top:251.89px;font-size:9.30px;line-height:9.30px;color:#111;font-family:'Liberation Serif', serif;transform:scaleX(0.9187);-webkit-text-stroke:0.15px #111;">data, it is clear that girls would perform better (than other girls) in smaller class sizes, but would</div><div class="t" style="left:226.00px;top:271.53px;font-size:9.30px;line-height:9.30px;color:#111;font-family:'Liberation Serif', serif;transform:scaleX(0.9179);-webkit-text-stroke:0.15px #111;">not necessarily perform better than the boys in those smaller class sizes.</div><div class="t" style="left:381.00px;top:291.17px;font-size:9.30px;line-height:9.30px;color:#000;font-family:'Liberation Serif', serif;font-weight:700;transform:scaleX(0.8820);-webkit-text-stroke:0.35px #000;">Part B</div><div class="t" style="left:252.00px;top:310.81px;font-size:9.30px;line-height:9.30px;color:#111;font-family:'Liberation Serif', serif;transform:scaleX(0.9170);-webkit-text-stroke:0.15px #111;">My proposed project falls under the research area: prediction of corporate</div><div class="t" style="left:226.00px;top:330.45px;font-size:9.30px;line-height:9.30px;color:#111;font-family:'Liberation Serif', serif;transform:scaleX(0.9177);-webkit-text-stroke:0.15px #111;">performance/business failure from available data. The main research question is: How useful are</div><div class="t" style="left:226.00px;top:350.09px;font-size:9.30px;line-height:9.30px;color:#111;font-family:'Liberation Serif', serif;transform:scaleX(0.9190);-webkit-text-stroke:0.15px #111;">social media posts by employees (by executives as well as lower-level employees) in providing</div><div class="t" style="left:226.00px;top:369.73px;font-size:9.30px;line-height:9.30px;color:#111;font-family:'Liberation Serif', serif;transform:scaleX(0.9165);-webkit-text-stroke:0.15px #111;">information on the ethical culture and ethics of employees over and above official information</div><div class="t" style="left:226.00px;top:389.37px;font-size:9.30px;line-height:9.30px;color:#111;font-family:'Liberation Serif', serif;transform:scaleX(0.9173);-webkit-text-stroke:0.15px #111;">released by the company – such as disclosure of a code of ethics and other information in annual</div><div class="t" style="left:226.00px;top:409.01px;font-size:9.30px;line-height:9.30px;color:#111;font-family:'Liberation Serif', serif;transform:scaleX(0.9180);-webkit-text-stroke:0.15px #111;">reports – and for predicting business failure as a result of ethical lapses?</div><div class="t" style="left:252.00px;top:428.65px;font-size:9.30px;line-height:9.30px;color:#111;font-family:'Liberation Serif', serif;transform:scaleX(0.9151);-webkit-text-stroke:0.15px #111;">Some variables I selected for the research project include:</div><div class="t" style="left:252.00px;top:448.29px;font-size:9.30px;line-height:9.30px;color:#111;font-family:'Liberation Serif', serif;transform:scaleX(0.9147);-webkit-text-stroke:0.15px #111;">Whether company filed for bankruptcy - the probability of a company going bankrupt.</div><div class="a" style="left:239.2px;top:450.8px;width:3.4px;height:3.4px;border-radius:50%;background:#000"></div><div class="a" style="left:400px;top:101.2px;width:1.5px;height:1.6px;background:#666"></div><div class="a" style="left:418px;top:101.2px;width:2px;height:1.8px;background:#666"></div><svg style="left:220px;top:316px" width="290" height="30" viewBox="0 0 290 30"><path d="M37.3 7.5 C100 7 200 6.7 283.1 6.6" stroke="#e8141c" stroke-width="2.6" fill="none" stroke-linecap="round"/><path d="M3.6 28.6 C60 28.2 120 27.8 174.2 27.4" stroke="#e8141c" stroke-width="2.6" fill="none" stroke-linecap="round"/></svg></div><div class="a" style="left:696.3px;top:77.4px;width:81px;height:13.2px;background:#fff;border:1px solid #6e6e6e;box-shadow:1px 1px 2px rgba(0,0,0,.2)"></div><div class="t" style="left:699.90px;top:81.64px;font-size:6.80px;line-height:6.80px;color:#444;transform:scaleX(0.9428);">Settings and more (Alt+F)</div></body></html>
